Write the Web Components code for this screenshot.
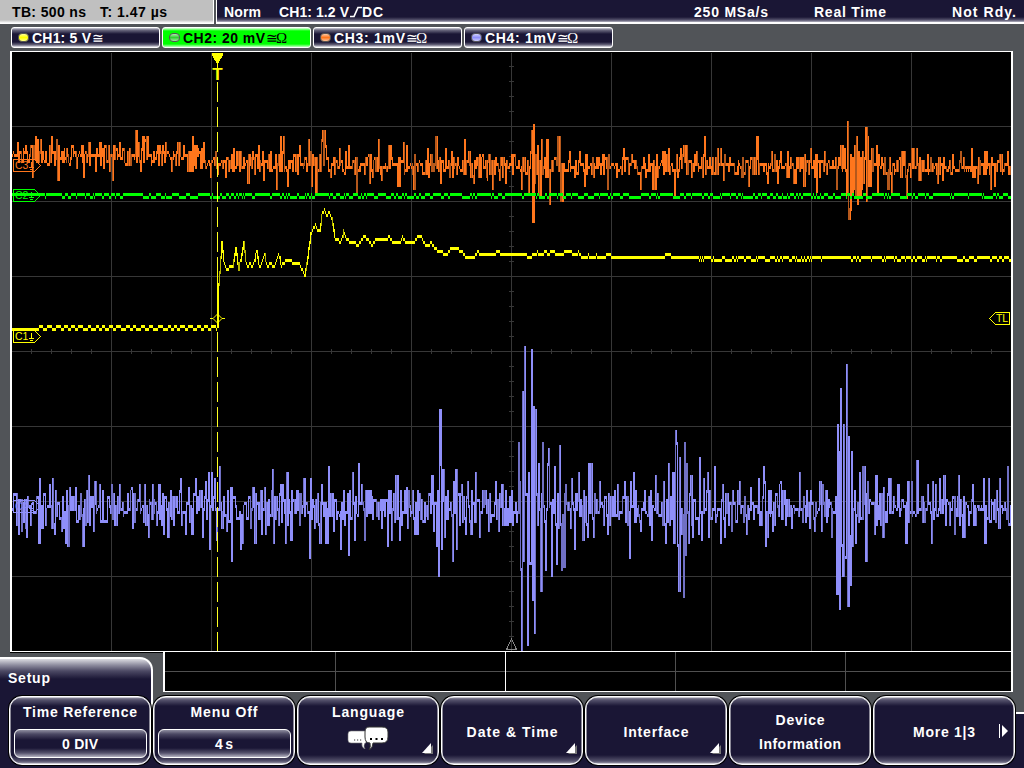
<!DOCTYPE html>
<html lang="en">
<head>
<meta charset="utf-8">
<title>Oscilloscope</title>
<style>
  html, body { margin: 0; height: 100%; background: #515458; overflow: hidden; }
</style>
</head>
<body>
<scope-app></scope-app>

<script>
// Text run stretched with letter-spacing to a given pixel width.
class ScopeText extends HTMLElement {
  constructor() {
    super();
    this.attachShadow({ mode: "open" });
    this.shadowRoot.innerHTML = `<style>
        :host { display: block; white-space: nowrap; font: bold 14px/16px "Liberation Sans", Arial, sans-serif; }
      </style><span><slot></slot></span>`;
  }
  connectedCallback() {
    const target = Number(this.getAttribute("w"));
    if (!target) return;
    const natural = this.shadowRoot.querySelector("span").getBoundingClientRect().width;
    const gaps = this.textContent.length - 1;
    this.style.letterSpacing = `${(target - natural) / gaps}px`;
    this.style.width = `${target}px`;
  }
}

class ScopeStatus extends HTMLElement {
  constructor() {
    super();
    this.attachShadow({ mode: "open" });
    this.shadowRoot.innerHTML = `
      <style>
        :host { display: flex; height: 24px; gap: 2px; }
        .time, .main { box-sizing: border-box; height: 24px; display: flex; align-items: center; }
        .time {
          width: 214px; padding-left: 12px; gap: 14px; color: #000;
          background: linear-gradient(#c0c0c0 20px, #fff 23px);
          border-right: 1px solid #fff; border-bottom: 1px solid #fff;
        }
        .main {
          flex: 1; padding: 0 8px 1px 7px; color: #fff;
          background: linear-gradient(#1a1635 17px, #55526c 20px, #b5b4c2 22px, #fff 22px);
          border-left: 1px solid #fff;
        }
        svg { display: block; width: 13px; height: 12px; }
        .norm { margin-right: 18px; }
        .rate { margin-left: auto; }
        .mode { margin-left: 46px; }
        .state { margin-left: 66px; }
      </style>
      <div class="time">
        <scope-text w="74">TB: 500 ns</scope-text>
        <scope-text w="67">T: 1.47 µs</scope-text>
      </div>
      <div class="main">
        <scope-text class="norm" w="37">Norm</scope-text>
        <scope-text w="70">CH1: 1.2 V</scope-text>
        <svg viewBox="0 0 13 12"><path d="M1 10.5h4L9 1.500h4" fill="none" stroke="#fff" stroke-width="1.7"/></svg>
        <scope-text w="21">DC</scope-text>
        <scope-text class="rate" w="74">250 MSa/s</scope-text>
        <scope-text class="mode" w="72">Real Time</scope-text>
        <scope-text class="state" w="64">Not Rdy.</scope-text>
      </div>`;
  }
}

class ScopeChannel extends HTMLElement {
  constructor() {
    super();
    this.attachShadow({ mode: "open" });
  }
  connectedCallback() {
    const width = this.getAttribute("w");
    this.shadowRoot.innerHTML = `
      <style>
        :host {
          display: flex; align-items: center; box-sizing: border-box; width: 149px; height: 21px;
          padding-left: 6px; color: #fff; border: 1px solid #fff; border-radius: 3px;
          background: linear-gradient(#d0d0da, #6c6a80 2px, #1a1635 6px, #1a1635 14px, #6c6a80 17px, #e8e8ee);
        }
        :host([active]) { color: #000; background: linear-gradient(#e0ffe0, #0f0 3px, #0f0 16px, #c0ffc0); }
        .led {
          width: 11px; height: 9px; box-sizing: border-box; border-radius: 4px; margin-right: 3px;
          border: 1px solid #555; background: linear-gradient(#fff9, transparent 50%, #fff8), var(--led);
        }
        .sym { font: 14px/15px "Liberation Serif", serif; display: flex; margin: 2px 0 0 1px; }
        .sym b { font-weight: normal; width: 10px; }
        .sym i { font-style: normal; font-size: 15px; }
      </style>
      <span class="led"></span>
      <scope-text w="${width}">${this.getAttribute("label")}</scope-text>
      <span class="sym"><b>≅</b>${this.hasAttribute("ohm") ? "<i>Ω</i>" : ""}</span>`;
  }
}

// Deterministic noise so that the traces look the same on each load.
function randomFrom(seed) {
  let s = seed;
  return () => {
    s = (s * 1664525 + 1013904223) >>> 0;
    return s / 4294967296;
  };
}

function parsePoints(text) {
  return text.trim().split(/\s+/).map((p) => p.split(",").map(Number));
}

// ADC levels are three pixels apart.
const quantize = (y) => Math.round((y - 1) / 3) * 3 + 1;

const PEAKS_C3 = `
14,151 18,142 22,160 26,145 33,174 36,136 38,139 41,139 45,160 52,136 55,163 57,140 58,177 65,148 70,163 73,144
77,165 84,174 89,142 96,169 100,142 104,166 110,169 113,177 115,157 120,143 126,162 130,147 136,130 139,142 141,168 143,136
146,140 148,137 153,160 158,144 162,163 166,142 172,168 178,142 182,158 188,170 193,136 197,144 201,165 204,143 208,164 211,175
214,157 218,172 226,176 230,160 234,148 240,168 248,180 251,158 259,146 264,177 271,151 277,186 281,136 284,137 288,183 293,168
300,146 304,165 309,139 312,184 316,192 319,170 322,140 323,130 326,144 330,170 331,175 334,157
340,148 345,172 349,145 353,160 357,192 358,168 365,172 370,180 371,154 373,174 379,139 382,178 386,163 389,145 398,183 404,142
407,146 413,172 414,186 420,160 423,172 428,148 431,155 436,136 441,180 446,148 452,150 460,167 465,139 469,150 474,180
478,163 483,154 488,177 493,186 494,160 500,178 504,157 506,180 512,155 515,154 522,186 528,160 529,193 531,151 532,130
533,219 534,124 535,180 536,154 538,145 539,193 542,139 544,166 547,139 550,201 553,170 558,136 561,200 564,163 570,151
575,175 580,151 585,183 597,157 604,172 608,186 611,166 624,148 632,154 641,187 649,154 653,187 663,151 669,148 675,193
681,148 684,145 692,174 697,152 703,174 705,136 712,173 718,148 721,149 724,178 734,163 749,183 752,156 757,136 758,148
768,180 772,151 778,180 781,151 788,151 794,180 804,183 805,154 811,148 817,190 825,151 829,160 837,186 841,145 845,148
847,193 848,121 849,217 850,208 851,154 852,190 853,158 854,188 855,145 856,195 857,136 858,202 859,150 860,193 861,156
862,188 863,152 864,180 866,127 867,198 868,136 869,184 871,160 872,148 874,163 877,145 878,193 882,157 888,187 892,190
900,157 902,151 907,196 912,148 917,148 919,178 928,154 938,180 943,178 953,154 961,151 972,148 978,180 985,151 987,151
991,187 995,183 1000,154 1008,151`;

const PEAKS_C4 = `
14,493 19,531 22,528 27,535 39,541 40,478 50,484 52,525 53,478 55,531 62,528 66,541 68,544 70,487 76,487 83,543
89,475 94,529 95,481 100,484 112,484 117,523 120,484 132,488 140,484 145,484 149,535 153,484 159,484 164,531 168,535
181,478 186,531 189,487 192,531 196,478 203,535 206,481 209,472 210,547 212,472 215,478 217,538 220,466 227,528 231,487
232,559 241,547 243,541 253,487 255,541 262,531 265,487 266,531 273,469 274,541 281,484 286,541 287,472 291,537 304,478
310,556 311,478 320,541 322,484 326,541 329,466 334,528
341,547 349,553 353,472 355,538 359,463 362,484 365,537 368,490 388,544 389,490 392,538 396,475 400,538 407,487 415,532
418,490 429,493 432,475 434,530 437,544 438,490 439,574 440,409 441,463 442,547 443,469 444,500 445,535 453,559 454,481
456,469 457,547 462,484 466,532 468,481 471,532 476,472 480,535 483,490 489,530 496,481 499,529 502,484 505,522 512,490
513,523 517,521 519,442 520,480 521,568 522,652 523,391 524,559 525,346 526,493 527,493 528,643 529,472 530,562 531,562
532,349 533,598 534,406 535,631 536,409 537,493 539,463 541,589 543,442 546,568 548,463 549,448 552,574 555,466 557,562
560,445 562,568 564,565 566,484 571,526 572,478 575,547 579,472 583,538 588,534 589,463 592,481 594,535 600,481 608,532
618,484 625,481 630,556 631,481 634,472 641,529 645,490 652,538 656,475 664,481 666,541 669,463 673,472 674,541 676,430
677,442 678,544 679,588 680,457 682,532 684,595 685,442 686,553 687,463 689,541 691,475 693,535 699,532 700,457 702,538
704,478 708,472 709,535 715,466 721,541 723,484 725,535 732,529 740,481 747,532 751,487 759,478 764,466 765,481 766,544
768,535 773,529 780,484 781,481 792,526 800,472 810,526 815,529 820,481 822,529 823,484 832,535 837,592 838,424 839,450
840,607 841,388 842,545 843,574 844,424 845,556 846,556 847,364 848,604 849,436 850,535 851,583 852,451 853,544 856,541
860,472 863,466 865,466 866,559 868,481 875,532 876,475 883,535 884,487 889,478 898,484 906,541 908,481 912,481 917,460
928,484 932,541 933,481 936,484 940,478 944,475 955,532 959,475 963,535 973,484 984,478 985,541 989,478 999,526 1000,478
1008,466 1010,523`;

const CURVE_C1 = `
217,325 218,283 219,270 221,241 223,258 226,268 229,266 232,266 235,247 238,268 240,258 243,241 245,258 247,266 249,262
252,266 256,250 259,266 264,254 267,266 270,262 273,266 278,254 281,264 285,260 299,261 304,275 307,255 310,233 313,226
315,224 317,230 319,230 321,214 324,208 326,214 329,211 331,216 334,236 338,239 340,241 343,230 346,237 350,241 358,243
364,235 368,239 372,244 375,239 382,238 389,236 392,241 400,240 402,235 405,241 413,241 417,235 421,236 425,244 431,242
436,248 441,251 446,253 450,247 457,247 461,250 466,256 473,256 477,251 484,253 494,253 496,250 505,254 520,253 524,253
529,256 537,251 541,253 545,250 548,253 551,250 560,254 562,254 564,251 570,250 574,254 578,251 580,254 584,256 588,254
592,256 596,254 600,256 610,253 612,256 663,256 666,253 670,254 673,256 1011,256`;

// One span per pixel column, from the previous sample to this one.
// A step of a single level is left unconnected.
function buildTrace(valueAt, rand, thick = 0) {
  let bright = "";
  let dim = "";
  let last = quantize(valueAt(12)[0]);
  let before = last;
  for (let x = 12; x < 1011; x++) {
    const ys = valueAt(x).map(quantize);
    const all = Math.abs(last - ys[0]) > 3 ? [last, ...ys] : ys;
    if (rand() < thick) all.push(last, before);
    const top = Math.min(...all);
    const bottom = Math.min(652, Math.max(...all) + 3);
    const cell = `M${x} ${top}h1V${bottom}h-1z`;
    if (bottom - top > 5 && rand() < 0.3) dim += cell;
    else bright += cell;
    before = last;
    last = ys[ys.length - 1];
  }
  return [bright, dim];
}

function noisyTrace(peaks, seed, centre, spread, hold, thick) {
  const rand = randomFrom(seed);
  const byColumn = new Map();
  for (const [x, y] of parsePoints(peaks)) byColumn.set(x - 1, y);
  let value = centre(12);
  return buildTrace((x) => {
    if (byColumn.has(x)) return [(value = byColumn.get(x))];
    if (rand() > hold || Math.abs(value - centre(x)) > spread * 0.6) {
      // Samples tend to swing to the other side of the centre line.
      const side = value > centre(x) ? -1 : 1;
      value = centre(x) + side * (rand() * 1.3 - 0.35) * spread * 0.8;
    }
    return [value];
  }, rand, thick);
}

function ditherTrace(level, seed, low) {
  const rand = randomFrom(seed);
  let down = false;
  return buildTrace((x) => {
    if (x > 32 && rand() < (down ? 0.35 : low)) down = !down;
    return [level + (down ? 3 : 0)];
  }, rand);
}

function curveTrace(seed) {
  const rand = randomFrom(seed);
  const points = parsePoints(CURVE_C1);
  let down = false;
  let run = 0;
  return buildTrace((x) => {
    if (x < 217) {
      run++;
      if (x > 34 && run > 2 && (run > 4 || rand() < 0.4)) {
        down = !down;
        run = 0;
      }
      return [x < 35 || down ? 328 : 325];
    }
    if (x > 698) {
      if (rand() < (down ? 0.45 : 0.2)) down = !down;
      return [down && !(x > 826 && x < 850) ? 259 : 256];
    }
    const i = points.findIndex((p) => p[0] > x);
    const [x0, y0] = points[i - 1];
    const [x1, y1] = points[i];
    return [y0 + ((y1 - y0) * (x - x0)) / (x1 - x0)];
  }, rand);
}

class ScopeScreen extends HTMLElement {
  constructor() {
    super();
    this.attachShadow({ mode: "open" });
  }
  grid() {
    let d = "";
    for (let x = 111; x < 1011; x += 100) d += `M${x} 53h1v598h-1z`;
    for (let y = 126; y < 651; y += 75) d += `M12 ${y}h999v1h-999z`;
    for (let x = 31; x < 1011; x += 20) d += `M${x} 349h1v5h-1z`;
    for (let y = 66; y < 651; y += 15) d += `M509 ${y}h5v1h-5z`;
    return `<path d="${d}" fill="#373737"/>`;
  }
  tag(name, y, colour) {
    return `
      <g transform="translate(13 ${y})">
        <path d="M.5 .5h21l6 6-6 6H.5z" fill="none" stroke="${colour}"/>
        <text x="2" y="10" fill="${colour}">${name}</text>
        <path d="M18.5 3v5M16 8.5h5M17 10.5h3" fill="none" stroke="${colour}"/>
      </g>`;
  }
  trace([bright, dim], colour, shade) {
    return `<path d="${bright}" fill="${colour}"/><path d="${dim}" fill="${shade}"/>`;
  }
  connectedCallback() {
    const c1 = curveTrace(11);
    const c2 = ditherTrace(193, 5, 0.2);
    const c3 = noisyTrace(PEAKS_C3, 77, (x) => (x < 205 ? 154 : x < 380 ? 161 : 165), 14, 0.3, 0.2);
    const c4 = noisyTrace(PEAKS_C4, 42, () => 507, 24, 0.3, 0.2);
    this.shadowRoot.innerHTML = `
      <style>
        :host { display: block; width: 1003px; height: 602px; background: #000; }
        svg { display: block; shape-rendering: crispEdges; }
        text { font: 10.5px "Liberation Sans", Arial, sans-serif; }
        .mark { font-weight: bold; font-size: 17px; }
      </style>
      <svg width="1003" height="602" viewBox="10 51 1003 602">
        ${this.grid()}
        ${this.trace(c4, "#8f8ffa", "#7070c4")}
        ${this.trace(c3, "#ff761c", "#b4581c")}
        ${this.trace(c2, "#00ff00", "#00b400")}
        ${this.trace(c1, "#ffff00", "#b4b400")}
        ${this.tag("C3", 159, "#ff761c")}
        ${this.tag("C2", 189, "#00ff00")}
        ${this.tag("C1", 330, "#ffff00")}
        ${this.tag("C4", 500, "#8f8ffa")}
        <path d="M217.5 82V651" stroke="#ffff20" stroke-dasharray="20 5"/>
        <path d="M217 270h1v57h-1z" fill="#ffff00"/>
        <path d="M212 53h11v2l-5 9v5h-1v-5l-5-9z" fill="#ffff00"/>
        <text class="mark" x="212.3" y="80" fill="#ffff00">T</text>
        <path d="M210 318.500h3l4.500-4.500 4.500 4.500h3M213 318.500l4.500 4.500 4.500-4.500" fill="none" stroke="#ffff00" shape-rendering="auto"/>
        <path d="M1009.500 312.500h-14l-6 6 6 6h14z" fill="none" stroke="#ffff00"/>
        <text x="996" y="322" fill="#ffff00" textLength="12">TL</text>
        <path d="M511.500 639l5 10.500h-10z" fill="none" stroke="#888"/>
        <path d="M10 51h1003v1H10zM10 51h2v601h-2zM1011 51h2v602h-2zM10 651h1003v1H10z" fill="#fff"/>
      </svg>`;
  }
}

class ScopeOverview extends HTMLElement {
  constructor() {
    super();
    this.attachShadow({ mode: "open" });
    this.shadowRoot.innerHTML = `
      <style>
        :host { display: block; width: 850px; height: 40px; background: #000; }
        svg { display: block; shape-rendering: crispEdges; }
      </style>
      <svg width="850" height="40" viewBox="0 0 850 40">
        <path d="M0 19.500h850M172.500 0v39M512.500 0v39M682.500 0v39" stroke="#505050"/>
        <path d="M342.500 0v39" stroke="#fff"/>
        <path d="M1 0v40M849 0v40" stroke="#fff" stroke-width="2"/>
        <path d="M0 39.500h850" stroke="#fff"/>
      </svg>`;
  }
}

class ScopeKey extends HTMLElement {
  constructor() {
    super();
    this.attachShadow({ mode: "open" });
    this.shadowRoot.innerHTML = `
      <style>
        :host {
          position: relative; display: flex; flex-direction: column; align-items: center; justify-content: center;
          box-sizing: border-box; width: 142px; height: 69px; padding-top: 2px; color: #fff; border: 1px solid #fff; border-radius: 13px;
          box-shadow: 0 0 0 1px #000, inset 0 0 0 .5px #fff;
          background: linear-gradient(#9a99aa, #55526c 3px, #1a1635 9px, #1a1635 58px, #55526c 64px, #a8a7b6);
        }
        :host([top]) { justify-content: flex-start; padding-top: 7px; }
        ::slotted(*) { flex: none; }
        .more { position: absolute; right: 5px; bottom: 10px; display: none; }
        :host([submenu]) .more { display: block; }
      </style>
      <slot></slot>
      <svg class="more" width="12" height="11"><path d="M2 10L11 1v9z" fill="#777" transform="translate(1 1)"/><path d="M1 10L10 0v10z" fill="#fff"/></svg>`;
  }
}

class ScopeField extends HTMLElement {
  constructor() {
    super();
    this.attachShadow({ mode: "open" });
    this.shadowRoot.innerHTML = `
      <style>
        :host {
          display: flex; align-items: center; justify-content: center; box-sizing: border-box;
          width: 133px; height: 29px; margin-top: 9px; border: 1px solid #fff; border-radius: 6px;
          background: linear-gradient(#8f8ea0, #4c4964 4px, #1a1635 10px, #1a1635 18px, #55526c 23px, #b5b4c2);
        }
      </style>
      <slot></slot>`;
  }
}

class ScopeMenu extends HTMLElement {
  constructor() {
    super();
    this.attachShadow({ mode: "open" });
    this.shadowRoot.innerHTML = `
      <style>
        :host { display: block; height: 111px; }
        .tab {
          box-sizing: border-box; width: 153px; height: 55px; padding: 11px 0 0 8px; color: #fff;
          border-top: 2px solid #fff; border-right: 2px solid #fff; border-top-right-radius: 13px;
          background: linear-gradient(#dcdce2, #8f8ea0 6px, #4c4964 12px, #1a1635 20px);
        }
        .panel { position: relative; box-sizing: border-box; height: 56px; background: #1a1635; border-top: 2px solid #fff; }
        .panel::before { content: ""; position: absolute; left: 0; top: -2px; width: 151px; height: 2px; background: #1a1635; }
        .keys { position: relative; display: grid; grid-template-columns: repeat(7, 142px); column-gap: 2px; margin-left: 9px; margin-top: -72px; }
        .icon { width: 44px; height: 26px; margin-top: 6px; }
        .next { position: absolute; right: 4px; top: 26px; }
        .lines { display: flex; flex-direction: column; align-items: center; gap: 8px; }
      </style>
      <div class="tab"><scope-text w="42">Setup</scope-text></div>
      <div class="panel"></div>
      <div class="keys">
        <scope-key top>
          <scope-text w="114">Time Reference</scope-text>
          <scope-field><scope-text w="36">0 DIV</scope-text></scope-field>
        </scope-key>
        <scope-key top>
          <scope-text w="67">Menu Off</scope-text>
          <scope-field><scope-text w="18">4 s</scope-text></scope-field>
        </scope-key>
        <scope-key top submenu>
          <scope-text w="72">Language</scope-text>
          <svg class="icon" viewBox="0 0 44 26">
            <path d="M5 5h15v12h-1q-2 3 0 6-4-2-3-6H5q-3 0-3-3V8q0-3 3-3z" fill="#fff" stroke="#777" stroke-width=".6"/>
            <path d="M23 1h13q6 0 6 5v5q0 6-6 6H27q0 5-4 7 2-3 1-7-5 0-5-6V6q0-5 4-5z" fill="#fff" stroke="#333"/>
            <path d="M8 14h1.200M11 14h1.200M14 14h1.200" stroke="#333"/>
            <path d="M24 13h2M29.500 13h2M35 13h2" stroke="#000" stroke-width="2"/>
          </svg>
        </scope-key>
        <scope-key submenu><scope-text w="91">Date &amp; Time</scope-text></scope-key>
        <scope-key submenu><scope-text w="65">Interface</scope-text></scope-key>
        <scope-key>
          <div class="lines"><scope-text w="49">Device</scope-text><scope-text w="82">Information</scope-text></div>
        </scope-key>
        <scope-key>
          <scope-text w="62">More 1|3</scope-text>
          <svg class="next" width="12" height="16"><path d="M1.500 1v14" stroke="#fff"/><path d="M4 2l6 6-6 6z" fill="#fff"/></svg>
        </scope-key>
      </div>`;
  }
}

class ScopeApp extends HTMLElement {
  constructor() {
    super();
    this.attachShadow({ mode: "open" });
    this.shadowRoot.innerHTML = `
      <style>
        :host { display: block; width: 1024px; height: 768px; overflow: hidden; background: #515458; }
        .channels { display: flex; gap: 2px; padding: 3px 0 3px 11px; }
        scope-screen { margin-left: 10px; }
        scope-overview { margin-left: 163px; margin-top: -1px; }
        scope-menu { margin-top: -35px; }
      </style>
      <scope-status></scope-status>
      <div class="channels">
        <scope-channel label="CH1: 5 V" w="59" style="--led:#ffff00"></scope-channel>
        <scope-channel label="CH2: 20 mV" w="82" ohm active style="--led:#30d030"></scope-channel>
        <scope-channel label="CH3: 1mV" w="71" ohm style="--led:#ff761c"></scope-channel>
        <scope-channel label="CH4: 1mV" w="71" ohm style="--led:#8f8ffa"></scope-channel>
      </div>
      <scope-screen></scope-screen>
      <scope-overview></scope-overview>
      <scope-menu></scope-menu>`;
  }
}

customElements.define("scope-text", ScopeText);
customElements.define("scope-status", ScopeStatus);
customElements.define("scope-channel", ScopeChannel);
customElements.define("scope-screen", ScopeScreen);
customElements.define("scope-overview", ScopeOverview);
customElements.define("scope-key", ScopeKey);
customElements.define("scope-field", ScopeField);
customElements.define("scope-menu", ScopeMenu);
customElements.define("scope-app", ScopeApp);
</script>
</body>
</html>
